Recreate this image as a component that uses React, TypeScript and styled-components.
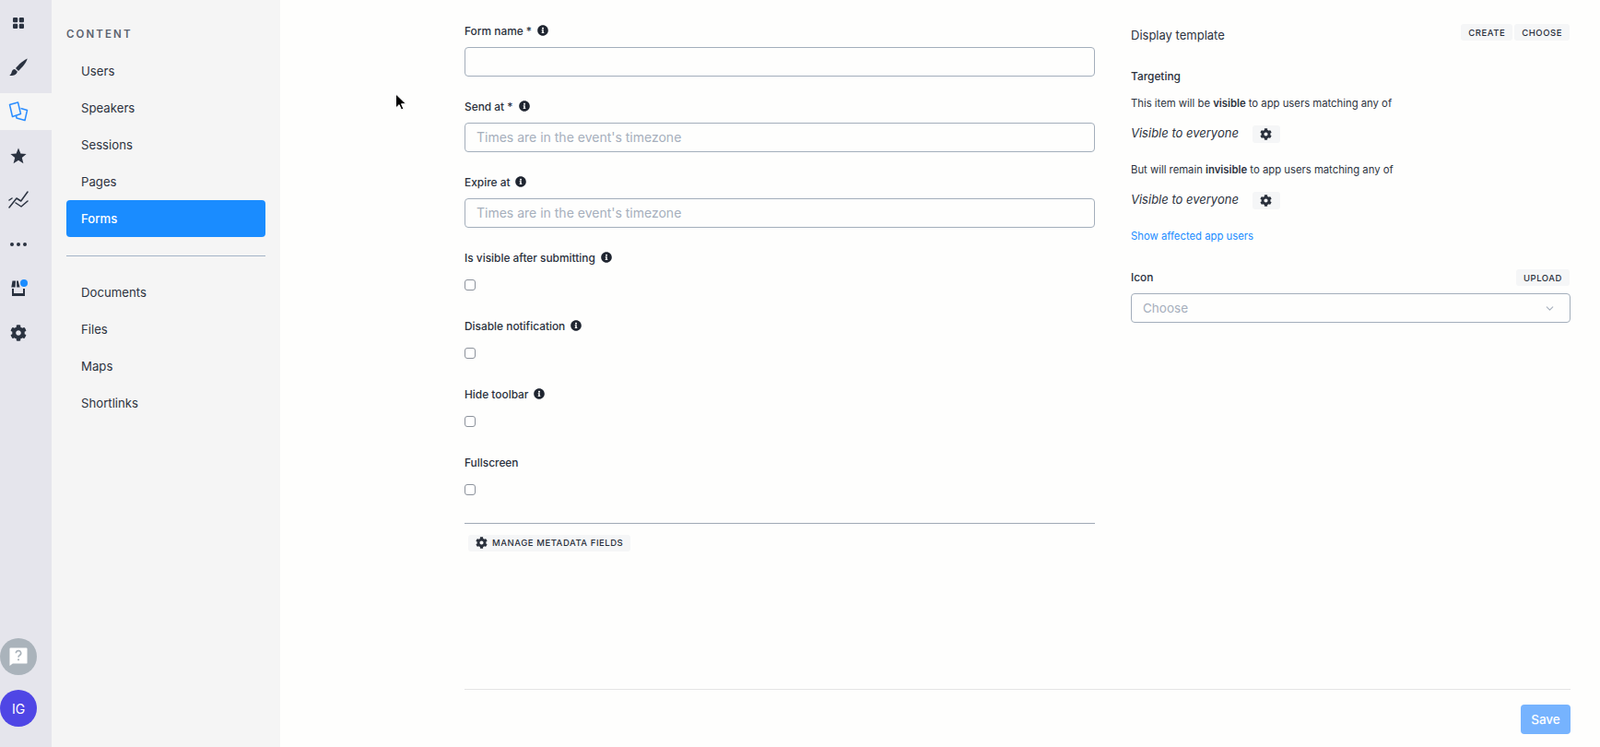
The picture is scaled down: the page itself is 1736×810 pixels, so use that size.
import React from "react";
import styled, { createGlobalStyle } from "styled-components";
import { FaCog, FaInfoCircle } from "react-icons/fa";
import { FiChevronDown } from "react-icons/fi";

const Global = createGlobalStyle`
  html, body { margin: 0; padding: 0; height: 100%; }
  body { font-family: Inter, "Liberation Sans", sans-serif; color: #2d3340; background: #fefefd; overflow: hidden; }
  * { box-sizing: border-box; }
`;

const Page = styled.div`
  display: flex;
  width: 100%;
  height: 810px;
  position: relative;
`;
const Rail = styled.nav`
  width: 56px;
  flex: none;
  background: #e5e5ec;
  display: flex;
  flex-direction: column;
  padding-top: 5px;
  gap: 8px;
`;
const RailItem = styled.div<{ $active?: boolean }>`
  height: 40px;
  display: flex;
  align-items: center;
  justify-content: center;
  padding-right: 16px;
  position: relative;
  color: #2a3240;
  background: ${(p) => (p.$active ? "#f5f5f5" : "transparent")};
`;
const RailBottom = styled.div`
  margin-top: auto;
  padding-bottom: 22px;
  display: flex;
  flex-direction: column;
  gap: 16px;
`;
const Round = styled.div<{ $bg: string }>`
  width: 40px;
  height: 40px;
  border-radius: 50%;
  background: ${(p) => p.$bg};
  color: #fff;
  font-size: 14px;
  font-weight: 400;
  display: flex;
  align-items: center;
  justify-content: center;
`;
const Dot = styled.span`
  position: absolute;
  top: 10px;
  left: 22px;
  width: 8px;
  height: 8px;
  border-radius: 50%;
  background: #1a8cff;
`;
const Panel = styled.aside`
  width: 248px;
  flex: none;
  background: #f5f5f5;
  padding: 29px 16px 0;
`;
const PanelTitle = styled.div`
  font-size: 11.5px;
  line-height: 16px;
  font-weight: 600;
  letter-spacing: 2.1px;
  color: #5b626e;
  margin-bottom: 12px;
`;
const NavItem = styled.div<{ $active?: boolean }>`
  height: 40px;
  display: flex;
  align-items: center;
  padding-left: 16px;
  font-size: 13.2px;
  border-radius: 4px;
  font-weight: ${(p) => (p.$active ? 500 : 400)};
  background: ${(p) => (p.$active ? "#1a8cff" : "transparent")};
  color: ${(p) => (p.$active ? "#fff" : "#2d3340")};
`;
const NavDivider = styled.hr`
  border: 0;
  border-top: 1px solid #a3b3c7;
  margin: 20px 0 19px;
`;
const Main = styled.main`
  flex: 1;
  min-width: 0;
  display: flex;
  flex-direction: column;
  padding: 23px 32px 0 200px;
`;
const Columns = styled.div`
  display: flex;
  gap: 39px;
  flex: 1;
`;
const FormColumn = styled.section`
  width: 684px;
  flex: none;
`;
const SideColumn = styled.section`
  flex: 1;
  min-width: 0;
  font-size: 12px;
`;
const Field = styled.div`
  margin-bottom: 22px;
`;
const CheckField = styled.div`
  height: 74px;
`;
const Label = styled.div`
  display: flex;
  align-items: center;
  gap: 6px;
  height: 20px;
  font-size: 11.9px;
  font-weight: 500;
  color: #2a303c;
  margin-bottom: 8px;
  svg { font-size: 12px; color: #1f2530; margin-top: -1px; }
`;
const CheckLabel = styled(Label)`
  margin-bottom: 14px;
`;
const TextBox = styled.input`
  display: block;
  width: 100%;
  height: 32px;
  border: 1px solid #a3aebb;
  border-radius: 4px;
  background: #fefefd;
  padding: 0 12px 1px;
  font: 400 14px Inter, "Liberation Sans", sans-serif;
  &::placeholder { color: #a6afbc; opacity: 1; }
`;
const Check = styled.input.attrs({ type: "checkbox" })`
  appearance: none;
  display: block;
  width: 12px;
  height: 12px;
  margin: 0;
  background: #fff;
  border: 1px solid #8c929b;
  border-radius: 3px;
`;
const FormRule = styled.hr`
  border: 0;
  border-top: 1px solid #a0a9b5;
  margin: 2px 0 11px;
`;
const SmallButton = styled.button`
  display: inline-flex;
  align-items: center;
  justify-content: center;
  gap: 5px;
  height: 18px;
  padding: 0 8px;
  border: 0;
  border-radius: 3px;
  background: #f5f6f7;
  color: #2a303c;
  font: 500 9.5px Inter, "Liberation Sans", sans-serif;
  letter-spacing: 0.55px;
  text-transform: uppercase;
  svg { font-size: 13px; }
`;
const ManageButton = styled(SmallButton)`
  margin-left: 4px;
`;
const GearButton = styled(SmallButton)`
  width: 30px;
  height: 19px;
  padding: 0;
  margin: 2px 0 0 -1px;
`;
const HeadRow = styled.div`
  display: flex;
  align-items: center;
  justify-content: space-between;
  height: 30px;
  margin-bottom: 22px;
  padding-right: 1px;
`;
const TemplateTitle = styled.div`
  font-size: 13px;
  color: #2d3340;
`;
const ButtonGroup = styled.div`
  display: flex;
  gap: 2px;
  margin-top: -6px;
`;
const SideHeading = styled.div`
  font-size: 11.9px;
  line-height: 16px;
  font-weight: 500;
  color: #2a303c;
  margin-bottom: 13px;
`;
const IconHeading = styled(SideHeading)`
  margin-bottom: 0;
`;
const SideText = styled.div`
  font-size: 11.3px;
  line-height: 16px;
  color: #2d3340;
  strong { font-weight: 600; }
`;
const RuleRow = styled.div`
  display: flex;
  align-items: center;
  gap: 16px;
  height: 20px;
  margin: 14px 0 22px;
`;
const Everyone = styled.em`
  font-size: 13px;
  color: #2d3340;
`;
const LinkText = styled.a`
  display: block;
  font-size: 11.3px;
  line-height: 16px;
  color: #1a8cff;
  margin-top: 2px;
  margin-bottom: 28px;
`;
const IconRow = styled.div`
  display: flex;
  align-items: center;
  justify-content: space-between;
  height: 18px;
  margin-bottom: 8px;
  padding-right: 1px;
`;
const SelectBox = styled.div`
  height: 32px;
  border: 1px solid #a3aebb;
  border-radius: 4px;
  display: flex;
  align-items: center;
  justify-content: space-between;
  padding: 0 15px 0 12px;
  font-size: 13.5px;
  color: #a6afbc;
  svg { font-size: 13px; color: #a6afbc; }
`;
const Footer = styled.footer`
  height: 63px;
  flex: none;
  border-top: 1px solid #e4e4e4;
  display: flex;
  justify-content: flex-end;
  padding-top: 16px;
`;
const SaveButton = styled.button`
  width: 54px;
  height: 32px;
  border: 0;
  border-radius: 4px;
  background: #76b3fe;
  color: #fff;
  font: 500 13.5px Inter, "Liberation Sans", sans-serif;
`;
const Pointer = styled.svg`
  position: absolute;
  left: 428px;
  top: 101px;
  width: 14px;
  height: 20px;
`;

const GridIcon = () => (
  <svg width="14" height="14" viewBox="0 0 14 14" fill="currentColor">
    <rect x="1" y="1" width="5.2" height="5.2" rx="1.2" />
    <rect x="7.8" y="1" width="5.2" height="5.2" rx="1.2" />
    <rect x="1" y="7.8" width="5.2" height="5.2" rx="1.2" />
    <rect x="7.8" y="7.8" width="5.2" height="5.2" rx="1.2" />
  </svg>
);
const BrushIcon = () => (
  <svg width="20" height="20" viewBox="0 0 20 20" fill="currentColor">
    <path d="M19.7.5C16 2 10 7 7 11l3 3C14 10 18.6 5 19.7.5Z" />
    <path d="M6 12C3 12 3 15 2 17c-1 1-1.5 1.5-1.5 2 3.5.5 8-1 8.3-4.5Z" />
  </svg>
);
const PagesIcon = () => (
  <svg width="22" height="22" viewBox="0 0 22 22" fill="none" stroke="#2a8dff" strokeWidth="1.5" strokeLinejoin="round">
    <path d="M1.5 3.5 10.5 1 13.5 13.5 4.5 16.5Z" />
    <path d="M13.5 7.5 20.5 9.5 18 20.5 9 18 8.5 15.5" />
  </svg>
);
const StarIcon = () => (
  <svg width="18" height="18" viewBox="0 0 18 18" fill="currentColor">
    <path d="M9 .6 11.4 6.6 17.6 7 12.8 11 14.4 17.2 9 13.8 3.6 17.2 5.2 11 .4 7 6.6 6.6Z" />
  </svg>
);
const ChartIcon = () => (
  <svg width="22" height="20" viewBox="0 0 22 20" fill="none" stroke="currentColor" strokeWidth="1.5" strokeLinejoin="round" strokeLinecap="round">
    <path d="M1 18 9 8 13.7 11 21 1" />
    <path d="M8 13 14 17 21 11" />
    <path d="M1 10 4 8" />
  </svg>
);
const DotsIcon = () => (
  <svg width="20" height="6" viewBox="0 0 20 6" fill="currentColor">
    <circle cx="3" cy="3" r="2" />
    <circle cx="10" cy="3" r="2" />
    <circle cx="17" cy="3" r="2" />
  </svg>
);
const StoreIcon = () => (
  <svg width="16" height="18" viewBox="0 0 16 18" fill="currentColor">
    <path d="M1.5.5H5L4.6 7.5H.3ZM6 .5H7.8L9.5 7.5H6.2Z" />
    <path d="M1 9H3V14H13V9H15V17H1Z" />
  </svg>
);
const HelpIcon = () => (
  <svg width="20" height="20" viewBox="0 0 21 21">
    <path d="M.5 1.5a1 1 0 0 1 1-1h18a1 1 0 0 1 1 1v16a1 1 0 0 1-1 1H4l-3.5 2.5Z" fill="#fff" />
    <path d="M7.7 6.6a2.8 2.8 0 1 1 4.2 2.4c-.9.5-1.4 1-1.4 2.2" fill="none" stroke="#aab3bb" strokeWidth="1.7" />
    <circle cx="10.5" cy="14" r="1.1" fill="#aab3bb" />
  </svg>
);

const PLACEHOLDER = "Times are in the event's timezone";

export default function App() {
  return (
    <Page>
      <Global />
      <Rail>
        <RailItem><GridIcon /></RailItem>
        <RailItem><BrushIcon /></RailItem>
        <RailItem $active><PagesIcon /></RailItem>
        <RailItem><StarIcon /></RailItem>
        <RailItem><ChartIcon /></RailItem>
        <RailItem><DotsIcon /></RailItem>
        <RailItem><StoreIcon /><Dot /></RailItem>
        <RailItem><FaCog size={18} /></RailItem>
        <RailBottom>
          <Round $bg="#aab3bb"><HelpIcon /></Round>
          <Round $bg="#4f46e5">IG</Round>
        </RailBottom>
      </Rail>
      <Panel>
        <PanelTitle>CONTENT</PanelTitle>
        <NavItem>Users</NavItem>
        <NavItem>Speakers</NavItem>
        <NavItem>Sessions</NavItem>
        <NavItem>Pages</NavItem>
        <NavItem $active>Forms</NavItem>
        <NavDivider />
        <NavItem>Documents</NavItem>
        <NavItem>Files</NavItem>
        <NavItem>Maps</NavItem>
        <NavItem>Shortlinks</NavItem>
      </Panel>
      <Main>
        <Columns>
          <FormColumn>
            <Field>
              <Label>Form name * <FaInfoCircle /></Label>
              <TextBox />
            </Field>
            <Field>
              <Label>Send at * <FaInfoCircle /></Label>
              <TextBox placeholder={PLACEHOLDER} />
            </Field>
            <Field>
              <Label>Expire at <FaInfoCircle /></Label>
              <TextBox placeholder={PLACEHOLDER} />
            </Field>
            <CheckField>
              <CheckLabel>Is visible after submitting <FaInfoCircle /></CheckLabel>
              <Check />
            </CheckField>
            <CheckField>
              <CheckLabel>Disable notification <FaInfoCircle /></CheckLabel>
              <Check />
            </CheckField>
            <CheckField>
              <CheckLabel>Hide toolbar <FaInfoCircle /></CheckLabel>
              <Check />
            </CheckField>
            <CheckField>
              <CheckLabel>Fullscreen</CheckLabel>
              <Check />
            </CheckField>
            <FormRule />
            <ManageButton><FaCog /> Manage metadata fields</ManageButton>
          </FormColumn>
          <SideColumn>
            <HeadRow>
              <TemplateTitle>Display template</TemplateTitle>
              <ButtonGroup>
                <SmallButton>Create</SmallButton>
                <SmallButton>Choose</SmallButton>
              </ButtonGroup>
            </HeadRow>
            <SideHeading>Targeting</SideHeading>
            <SideText>This item will be <strong>visible</strong> to app users matching any of</SideText>
            <RuleRow>
              <Everyone>Visible to everyone</Everyone>
              <GearButton><FaCog /></GearButton>
            </RuleRow>
            <SideText>But will remain <strong>invisible</strong> to app users matching any of</SideText>
            <RuleRow>
              <Everyone>Visible to everyone</Everyone>
              <GearButton><FaCog /></GearButton>
            </RuleRow>
            <LinkText>Show affected app users</LinkText>
            <IconRow>
              <IconHeading>Icon</IconHeading>
              <SmallButton>Upload</SmallButton>
            </IconRow>
            <SelectBox>
              Choose
              <FiChevronDown />
            </SelectBox>
          </SideColumn>
        </Columns>
        <Footer>
          <SaveButton>Save</SaveButton>
        </Footer>
      </Main>
      <Pointer viewBox="0 0 14 20">
        <path d="M1.5 1v15l3.6-3.4 2.4 5.4 2.4-1-2.4-5.3h5Z" fill="#000" stroke="#fff" strokeWidth="1" />
      </Pointer>
    </Page>
  );
}
